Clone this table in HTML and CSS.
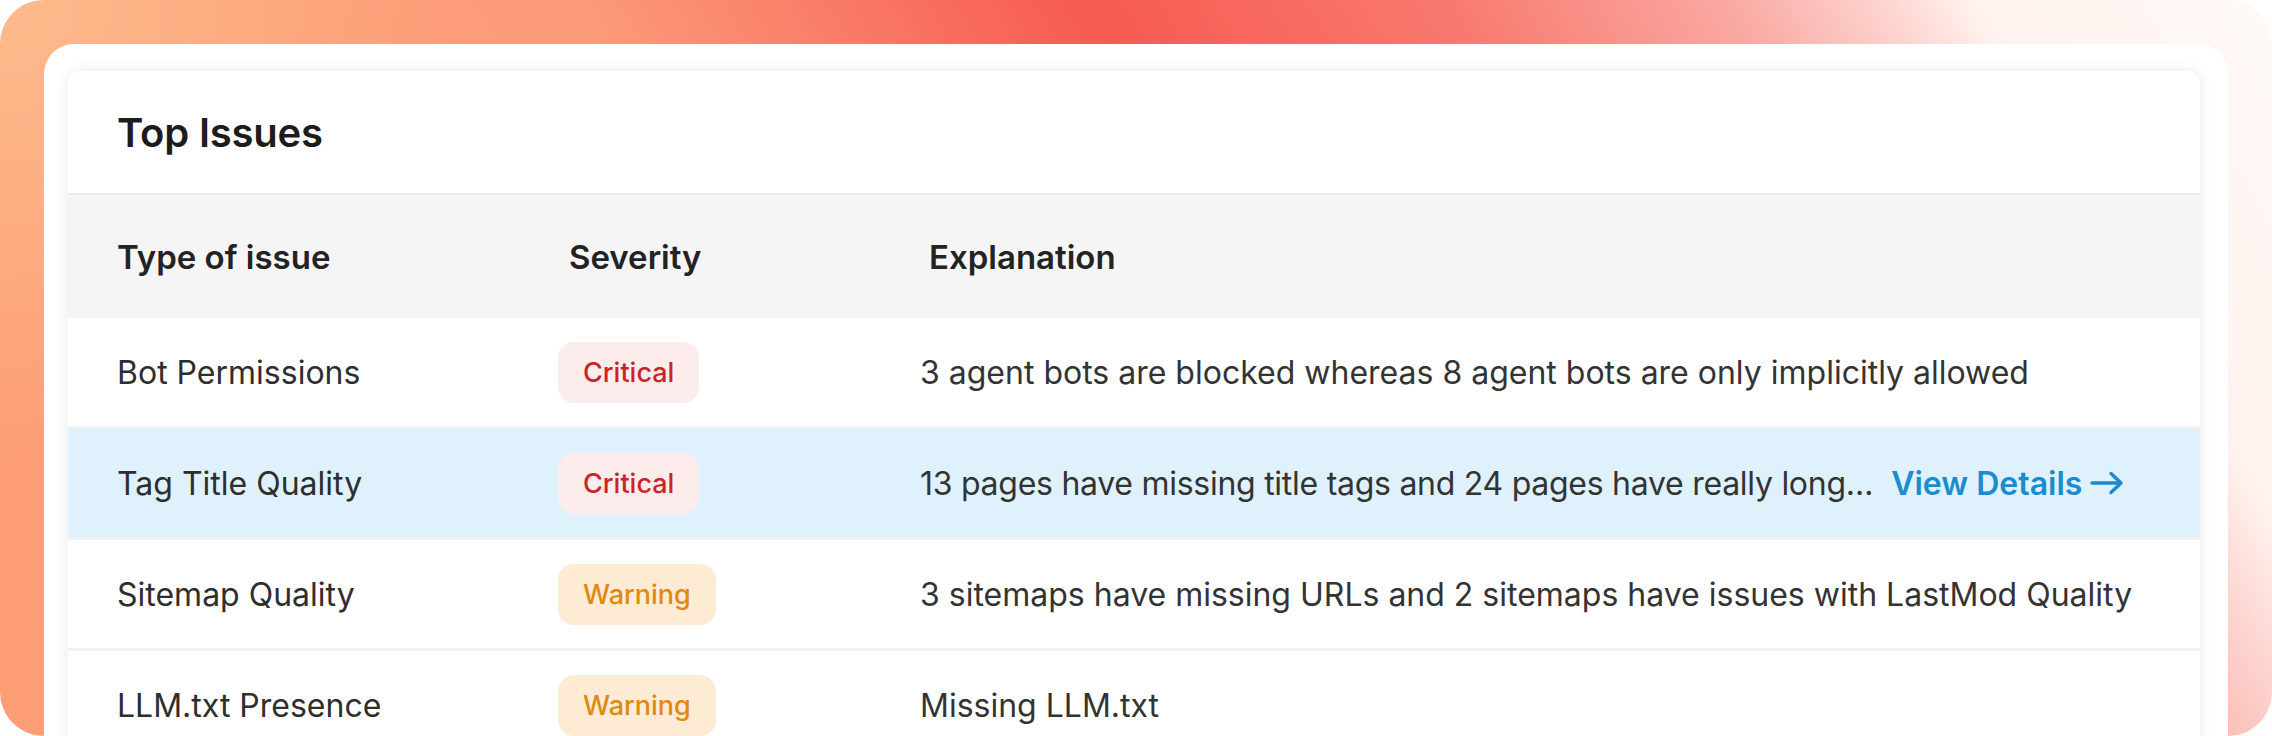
FILE: index.html
```html
<!DOCTYPE html>
<html lang="en">
<head>
<meta charset="utf-8">
<title>Top Issues</title>
<link rel="stylesheet" href="styles.css">
</head>
<body>
<div class="frame">
  <div class="panel">
    <div class="card">
      <div class="card-head">
        <h2 class="card-title">Top Issues</h2>
      </div>
      <div class="thead">
        <div class="th th-type">Type of issue</div>
        <div class="th th-sev">Severity</div>
        <div class="th th-exp">Explanation</div>
      </div>
      <div class="row">
        <div class="cell cell-type">Bot Permissions</div>
        <div class="cell"><span class="badge badge-critical">Critical</span></div>
        <div class="cell cell-exp">3 agent bots are blocked whereas 8 agent bots are only implicitly allowed</div>
      </div>
      <div class="row row-active">
        <div class="cell cell-type">Tag Title Quality</div>
        <div class="cell"><span class="badge badge-critical">Critical</span></div>
        <div class="cell cell-exp">
          <span class="exp-text">13 pages have missing title tags and 24 pages have really long…</span>
          <a class="details-link" href="#">View Details
            <svg class="arrow" width="34" height="26" viewBox="0 0 34 26" aria-hidden="true"><path d="M2 13H31M21 3.5L31 13L21 22.5" fill="none" stroke="currentColor" stroke-width="3.4" stroke-linecap="round" stroke-linejoin="round"/></svg>
          </a>
        </div>
      </div>
      <div class="row">
        <div class="cell cell-type">Sitemap Quality</div>
        <div class="cell"><span class="badge badge-warning">Warning</span></div>
        <div class="cell cell-exp">3 sitemaps have missing URLs and 2 sitemaps have issues with LastMod Quality</div>
      </div>
      <div class="row">
        <div class="cell cell-type">LLM.txt Presence</div>
        <div class="cell"><span class="badge badge-warning">Warning</span></div>
        <div class="cell cell-exp">Missing LLM.txt</div>
      </div>
    </div>
  </div>
</div>
</body>
</html>
```
FILE: styles.css
```css
html, body {
  margin: 0;
  padding: 0;
  background: #ffffff;
}

body {
  font-family: Inter, "Noto Sans", "Liberation Sans", sans-serif;
  color: #2f2f2f;
}

.frame {
  width: 2272px;
  height: 736px;
  border-radius: 44px;
  overflow: hidden;
  box-sizing: border-box;
  padding: 44px 44px 0 44px;
  background:
    radial-gradient(circle at 0 0, rgba(253, 187, 140, 1) 0, rgba(253, 185, 138, 0) 460px),
    linear-gradient(60deg,
      #fd9e76 0%,
      #fc9b77 37%,
      #f97f69 45.3%,
      #f75a51 56%,
      #f87a6f 69.5%,
      #faaaa4 80%,
      #fdd5d0 85.6%,
      #fff3ef 89%,
      #fffaf7 100%);
}

.panel {
  background: #ffffff;
  border-radius: 30px 30px 0 0;
  height: 100%;
  box-sizing: border-box;
  padding: 27px 28px 0 24px;
}

.card {
  background: #ffffff;
  border-radius: 12px;
  overflow: hidden;
  box-shadow: 0 0 14px rgba(0, 0, 0, 0.09);
}

.card-head {
  height: 122px;
  display: flex;
  align-items: center;
  padding-left: 49px;
  border-bottom: 2px solid #ececec;
}

.card-title {
  margin: 0;
  font-size: 40px;
  font-weight: 600;
  color: #1c1c1c;
  letter-spacing: -0.2px;
}

.thead,
.row {
  display: grid;
  grid-template-columns: 441px 362px 1fr;
  align-items: center;
  padding-left: 49px;
}

.thead {
  height: 123px;
  background: #f5f5f5;
}

.th {
  font-size: 33px;
  font-weight: 600;
  color: #232323;
}

.th-sev {
  padding-left: 11px;
}

.th-exp {
  padding-left: 9px;
}

.row {
  height: 108px;
  background: #ffffff;
}

.row + .row {
  border-top: 3px solid #f2f2f2;
}

.row-active {
  background: #dff1fd;
}

.cell {
  font-size: 32px;
  font-weight: 400;
  color: #2e2e2e;
  white-space: nowrap;
}

.cell-exp {
  display: flex;
  align-items: center;
  color: #333333;
}

.exp-text {
  letter-spacing: -0.27px;
}

.badge {
  display: inline-flex;
  align-items: center;
  height: 61px;
  padding: 0 25px;
  border-radius: 16px;
  font-size: 27px;
  font-weight: 500;
  box-sizing: border-box;
}

.badge-critical {
  background: #fdecec;
  color: #cc2229;
}

.badge-warning {
  background: #feebd4;
  color: #de8a10;
}

.details-link {
  display: inline-flex;
  align-items: center;
  margin-left: 18px;
  color: #1a8ccf;
  font-weight: 600;
  text-decoration: none;
}

.arrow {
  margin-left: 8px;
}
```
